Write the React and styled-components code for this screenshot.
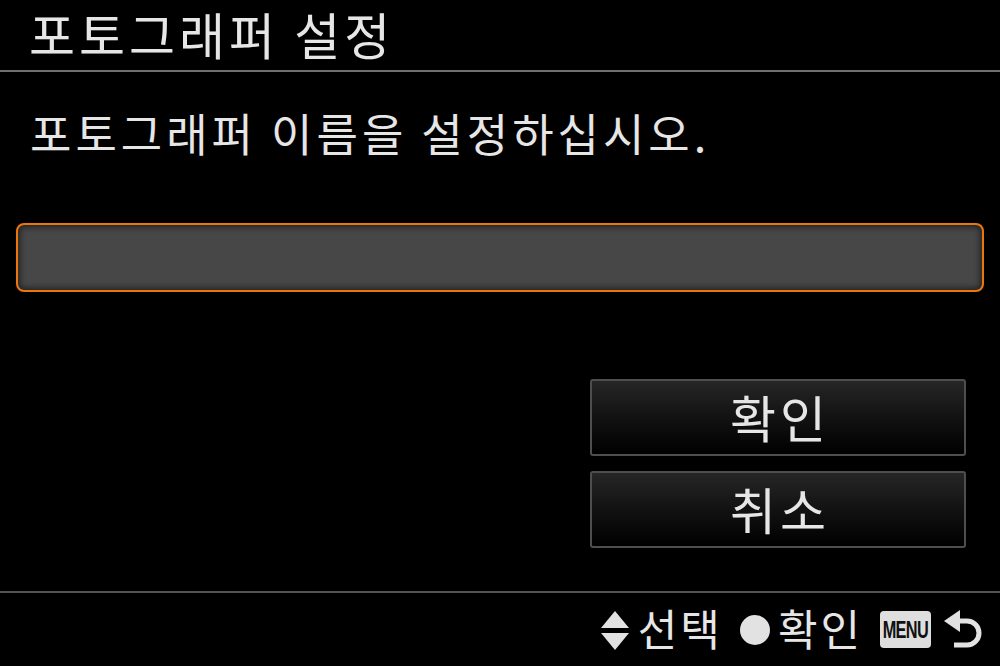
import React from 'react';
import styled, { createGlobalStyle } from 'styled-components';

// ** global */
const GlobalStyle = createGlobalStyle`
  html, body {
    margin: 0;
    padding: 0;
    background: #000;
  }
  body {
    font-family: "Noto Sans CJK KR", "Noto Sans", sans-serif;
    color: #e4e4e4;
  }
`

// ** styled component */
const Screen = styled.div`
  width: 1000px;
  height: 666px;
  background: #000;
  display: flex;
  flex-direction: column;
  overflow: hidden;
`

const Header = styled.header`
  height: 70px;
  border-bottom: 2px solid #6f6f6f;
  padding-left: 29px;
  display: flex;
  align-items: flex-start;
`

const Title = styled.h1`
  margin: 1px 0 0;
  padding-right: 8px;
  white-space: nowrap;
  font-size: 50px;
  font-weight: 400;
  line-height: 64px;
  color: #e6e6e6;
  letter-spacing: 4px;
`

const Body = styled.main`
  flex: 1;
  display: flex;
  flex-direction: column;
  padding: 0 16px;
`

const Prompt = styled.p`
  margin: 30px 0 0 14px;
  font-size: 45px;
  line-height: 62px;
  font-weight: 400;
  color: #e6e6e6;
  letter-spacing: 4px;
`

const InputBox = styled.div`
  margin-top: 59px;
  height: 65px;
  border: 2px solid #ec760e;
  border-radius: 8px;
  background: #474747;
  box-shadow: inset 0 0 6px 2px rgba(0, 0, 0, 0.55);
`

const ButtonStack = styled.div`
  margin: 87px 18px 0 auto;
  display: flex;
  flex-direction: column;
  gap: 15px;
`

const Button = styled.button`
  width: 376px;
  height: 77px;
  border: 2px solid #4e4e4e;
  border-radius: 3px;
  background: linear-gradient(#262626 0%, #141414 45%, #000 100%);
  color: #e6e6e6;
  font-family: "Noto Sans CJK KR", "Noto Sans", sans-serif;
  font-size: 50px;
  line-height: 1;
  letter-spacing: 4px;
  padding: 0 0 4px 4px;
  display: flex;
  align-items: center;
  justify-content: center;
`

const Footer = styled.footer`
  height: 73px;
  border-top: 2px solid #555;
  display: flex;
  align-items: center;
  justify-content: flex-end;
  padding-right: 15px;
`

const Hint = styled.div`
  display: flex;
  align-items: center;
  gap: ${p => p.$gap || 8}px;
  margin-left: 20px;
  font-size: 43px;
  line-height: 1;
  color: #e6e6e6;
  letter-spacing: 3px;
`

const HintLabel = styled.span`
  padding-bottom: 4px;
  margin-right: -3px;
`

const Dot = styled.span`
  width: 30px;
  height: 30px;
  border-radius: 50%;
  background: #e2e2e2;
`

const MenuBadge = styled.span`
  width: 51px;
  height: 37px;
  border-radius: 4px;
  background: #dedede;
  color: #111;
  display: flex;
  align-items: center;
  justify-content: center;
  font-family: "Liberation Sans", Arial, sans-serif;
  font-weight: 700;
  font-size: 24px;
  letter-spacing: -1px;
`

const MenuText = styled.span`
  display: inline-block;
  transform: scaleX(0.68);
`

const UpDownIcon = () => (
  <svg width="30" height="42" viewBox="0 0 30 42">
    <polygon points="15,2 29,19 1,19" fill="#e2e2e2" />
    <polygon points="1,24 29,24 15,41" fill="#e2e2e2" />
  </svg>
)

const ReturnIcon = () => (
  <svg width="42" height="42" viewBox="0 0 42 42">
    <polygon points="1,12 17,1 17,23" fill="#e2e2e2" />
    <path d="M15 12 H24 A12 12 0 0 1 24 36 H11" fill="none" stroke="#e2e2e2" strokeWidth="5" />
  </svg>
)

const App = () => {
  return (
    <Screen>
      <GlobalStyle />
      <Header>
        <Title>포토그래퍼 설정</Title>
      </Header>
      <Body>
        <Prompt>포토그래퍼 이름을 설정하십시오.</Prompt>
        <InputBox />
        <ButtonStack>
          <Button>확인</Button>
          <Button>취소</Button>
        </ButtonStack>
      </Body>
      <Footer>
        <Hint>
          <UpDownIcon />
          <HintLabel>선택</HintLabel>
        </Hint>
        <Hint>
          <Dot />
          <HintLabel>확인</HintLabel>
        </Hint>
        <Hint $gap={12}>
          <MenuBadge><MenuText>MENU</MenuText></MenuBadge>
          <ReturnIcon />
        </Hint>
      </Footer>
    </Screen>
  );
};

export default App;
